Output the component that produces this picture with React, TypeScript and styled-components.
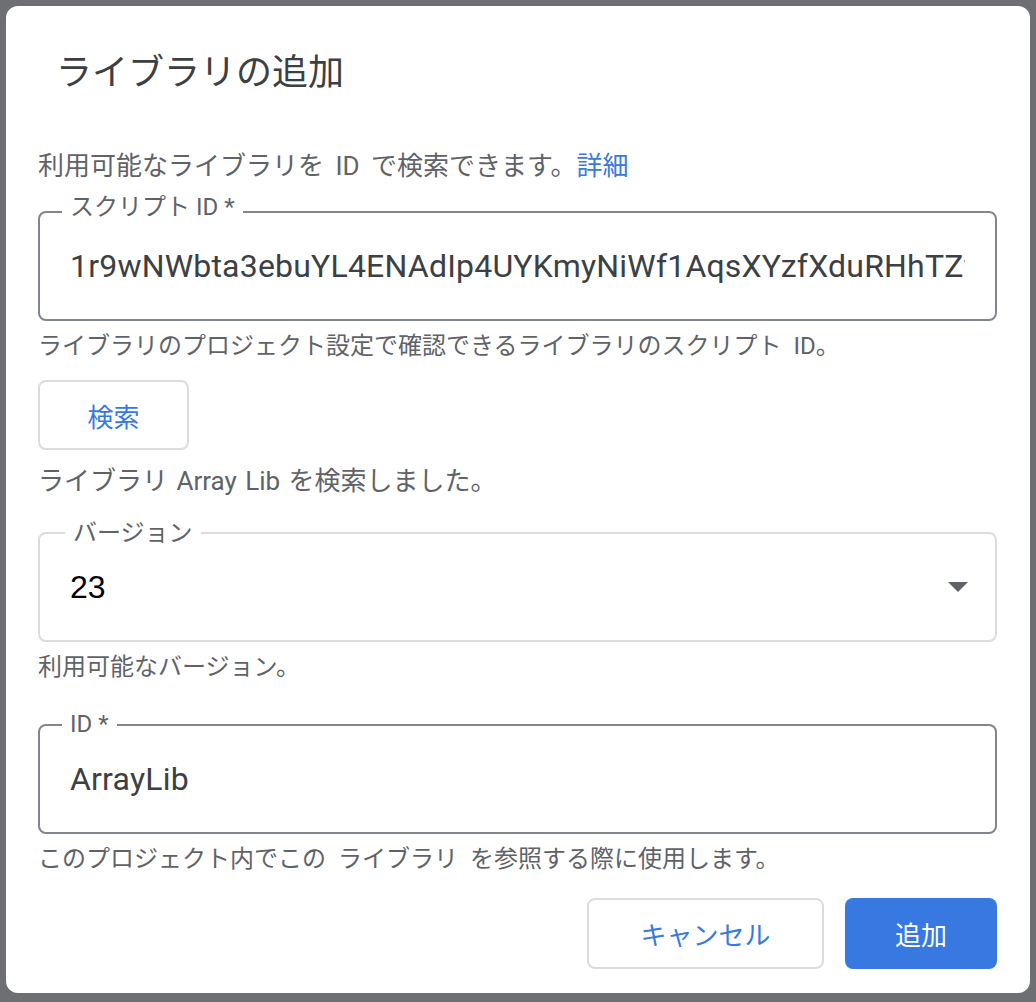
import React from 'react';
import styled, { createGlobalStyle } from 'styled-components';

const FONT = 'Roboto, "Noto Sans CJK JP", sans-serif';
const BLUE = '#3779e1';

const GlobalStyle = createGlobalStyle`
  html, body {
    margin: 0;
    padding: 0;
  }

  body {
    background: #6e6f72;
    font-family: ${FONT};
  }
`;

const Backdrop = styled.div`
  min-height: 100vh;
  box-sizing: border-box;
  padding: 6px;
`;

const Dialog = styled.div`
  width: 1024px;
  box-sizing: border-box;
  background: #fff;
  border-radius: 12px;
  padding: 45px 33px 24px 32px;
  display: flex;
  flex-direction: column;
`;

const Title = styled.h1`
  margin: 0 0 0 18px;
  font-size: 36px;
  line-height: 44px;
  font-weight: 400;
  color: #3c4043;
`;

const Description = styled.p`
  margin: 55px 0 0;
  font-size: 26px;
  line-height: 32px;
  word-spacing: 5px;
  color: #5f6368;
`;

const Link = styled.a`
  color: ${BLUE};
  text-decoration: none;
`;

const Field = styled.div<{ $top: number; $muted?: boolean }>`
  position: relative;
  margin-top: ${(p) => p.$top}px;
  height: 110px;
  box-sizing: border-box;
  border: 2px solid ${(p) => (p.$muted ? '#dadce0' : '#80868b')};
  border-radius: 8px;
  padding: 0 27px 0 30px;
  display: flex;
  align-items: center;
  justify-content: space-between;
`;

const FloatingLabel = styled.span<{ $lift?: number; $left?: number }>`
  position: absolute;
  top: -${(p) => p.$lift ?? 16}px;
  left: ${(p) => p.$left ?? 22}px;
  padding: 0 8px;
  background: #fff;
  font-size: 24px;
  line-height: 28px;
  color: #5f6368;
  white-space: nowrap;
`;

const TextInput = styled.input`
  flex: 1;
  min-width: 0;
  margin: 0 3px 0 0;
  padding: 0;
  border: none;
  outline: none;
  background: transparent;
  font-family: ${FONT};
  font-size: 32px;
  line-height: 40px;
  letter-spacing: 0.2px;
  color: #3c4043;
`;

const SelectValue = styled.span`
  font-family: "Liberation Sans", Arial, sans-serif;
  font-size: 32px;
  line-height: 40px;
  color: #000;
`;

const Helper = styled.p<{ $top?: number; $size?: number }>`
  margin: ${(p) => p.$top ?? 11}px 0 0;
  font-size: ${(p) => p.$size ?? 24}px;
  line-height: 28px;
  word-spacing: 6px;
  color: #5f6368;
`;

const Status = styled(Helper)`
  font-size: 26px;
  word-spacing: 2px;
`;

const OutlineButton = styled.button<{ $width: number }>`
  width: ${(p) => p.$width}px;
  height: 71px;
  box-sizing: border-box;
  border: 2px solid #dadce0;
  border-radius: 8px;
  background: #fff;
  color: ${BLUE};
  font-family: ${FONT};
  font-size: 26px;
  padding: 0;
  cursor: pointer;
`;

const SearchButton = styled(OutlineButton)`
  margin-top: 20px;
  height: 70px;
`;

const PrimaryButton = styled.button`
  width: 152px;
  height: 71px;
  box-sizing: border-box;
  border: none;
  border-radius: 8px;
  background: ${BLUE};
  color: #fff;
  font-family: ${FONT};
  font-size: 26px;
  padding: 0;
  cursor: pointer;
`;

const Actions = styled.div`
  margin-top: 25px;
  display: flex;
  justify-content: flex-end;
  gap: 21px;
`;

const Caret = () => (
  <svg width="20" height="10" viewBox="0 0 20 10" aria-hidden="true">
    <path d="M0 0 L20 0 L10 10 Z" fill="#5f6368" />
  </svg>
);

const App = () => {
  return (
    <Backdrop>
      <GlobalStyle />
      <Dialog>
        <Title>ライブラリの追加</Title>
        <Description>
          利用可能なライブラリを ID で検索できます。<Link href="#">詳細</Link>
        </Description>

        <Field $top={29}>
          <FloatingLabel $lift={20}>スクリプト ID *</FloatingLabel>
          <TextInput
            readOnly
            defaultValue="1r9wNWbta3ebuYL4ENAdIp4UYKmyNiWf1AqsXYzfXduRHhTZfG0dSxQ"
          />
        </Field>
        <Helper>ライブラリのプロジェクト設定で確認できるライブラリのスクリプト ID。</Helper>

        <SearchButton $width={151}>検索</SearchButton>
        <Status $top={17}>ライブラリ Array Lib を検索しました。</Status>

        <Field $top={37} $muted>
          <FloatingLabel $lift={15} $left={25}>
            バージョン
          </FloatingLabel>
          <SelectValue>23</SelectValue>
          <Caret />
        </Field>
        <Helper>利用可能なバージョン。</Helper>

        <Field $top={43}>
          <FloatingLabel>ID *</FloatingLabel>
          <TextInput readOnly defaultValue="ArrayLib" />
        </Field>
        <Helper>このプロジェクト内でこの ライブラリ を参照する際に使用します。</Helper>

        <Actions>
          <OutlineButton $width={237}>キャンセル</OutlineButton>
          <PrimaryButton>追加</PrimaryButton>
        </Actions>
      </Dialog>
    </Backdrop>
  );
};

export default App;
